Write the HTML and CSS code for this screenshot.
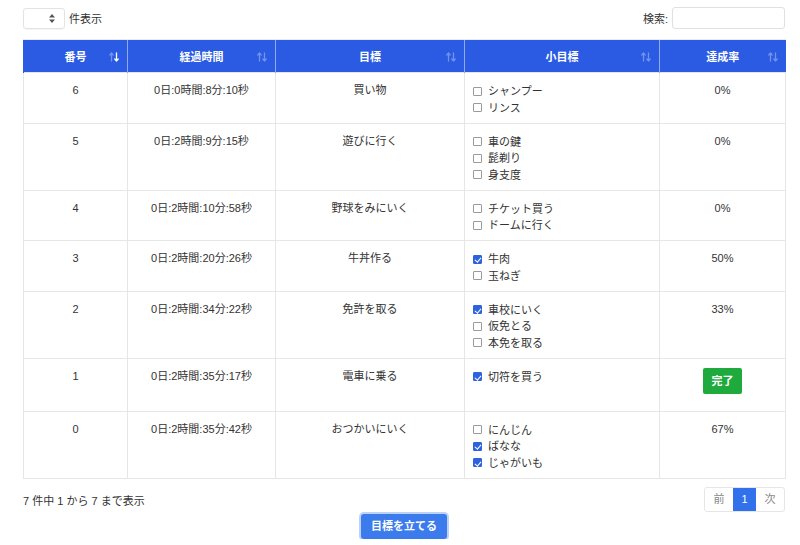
FILE: index.html
```html
<!DOCTYPE html>
<html lang="ja">
<head>
<meta charset="utf-8">
<link rel="stylesheet" href="styles.css">
</head>
<body>
<div class="page">
  <div class="topbar">
    <div class="length">
      <span class="select"><svg width="6" height="9" viewBox="0 0 6 9"><path d="M3 0L6 3.5H0Z M3 9L0 5.5H6Z" fill="#555"/></svg></span>
      <span>件表示</span>
    </div>
    <div class="search">
      <span>検索:</span>
      <span class="input"></span>
    </div>
  </div>

  <table class="grid">
    <colgroup>
      <col style="width:104px"><col style="width:148px"><col style="width:189px"><col style="width:195px"><col style="width:126px">
    </colgroup>
    <thead>
      <tr>
        <th><span class="hl">番号</span><span class="sort active"><svg width="10" height="10" viewBox="0 0 10 10"><path d="M2.5 9V1M0.8 3L2.5 1L4.2 3" class="up"/><path d="M7.5 1V9M5.8 7L7.5 9L9.2 7" class="down"/></svg></span></th>
        <th><span class="hl">経過時間</span><span class="sort"><svg width="10" height="10" viewBox="0 0 10 10"><path d="M2.5 9V1M0.8 3L2.5 1L4.2 3" class="up"/><path d="M7.5 1V9M5.8 7L7.5 9L9.2 7" class="down"/></svg></span></th>
        <th><span class="hl">目標</span><span class="sort"><svg width="10" height="10" viewBox="0 0 10 10"><path d="M2.5 9V1M0.8 3L2.5 1L4.2 3" class="up"/><path d="M7.5 1V9M5.8 7L7.5 9L9.2 7" class="down"/></svg></span></th>
        <th><span class="hl">小目標</span><span class="sort"><svg width="10" height="10" viewBox="0 0 10 10"><path d="M2.5 9V1M0.8 3L2.5 1L4.2 3" class="up"/><path d="M7.5 1V9M5.8 7L7.5 9L9.2 7" class="down"/></svg></span></th>
        <th><span class="hl">達成率</span><span class="sort"><svg width="10" height="10" viewBox="0 0 10 10"><path d="M2.5 9V1M0.8 3L2.5 1L4.2 3" class="up"/><path d="M7.5 1V9M5.8 7L7.5 9L9.2 7" class="down"/></svg></span></th>
      </tr>
    </thead>
    <tbody>
      <tr>
        <td>6</td><td>0日:0時間:8分:10秒</td><td>買い物</td>
        <td class="subs"><div class="item"><span class="cb"></span>シャンプー</div><div class="item"><span class="cb"></span>リンス</div></td>
        <td>0%</td>
      </tr>
      <tr>
        <td>5</td><td>0日:2時間:9分:15秒</td><td>遊びに行く</td>
        <td class="subs"><div class="item"><span class="cb"></span>車の鍵</div><div class="item"><span class="cb"></span>髭剃り</div><div class="item"><span class="cb"></span>身支度</div></td>
        <td>0%</td>
      </tr>
      <tr>
        <td>4</td><td>0日:2時間:10分:58秒</td><td>野球をみにいく</td>
        <td class="subs"><div class="item"><span class="cb"></span>チケット買う</div><div class="item"><span class="cb"></span>ドームに行く</div></td>
        <td>0%</td>
      </tr>
      <tr>
        <td>3</td><td>0日:2時間:20分:26秒</td><td>牛丼作る</td>
        <td class="subs"><div class="item"><span class="cb on"></span>牛肉</div><div class="item"><span class="cb"></span>玉ねぎ</div></td>
        <td>50%</td>
      </tr>
      <tr>
        <td>2</td><td>0日:2時間:34分:22秒</td><td>免許を取る</td>
        <td class="subs"><div class="item"><span class="cb on"></span>車校にいく</div><div class="item"><span class="cb"></span>仮免とる</div><div class="item"><span class="cb"></span>本免を取る</div></td>
        <td>33%</td>
      </tr>
      <tr>
        <td>1</td><td>0日:2時間:35分:17秒</td><td>電車に乗る</td>
        <td class="subs"><div class="item"><span class="cb on"></span>切符を買う</div></td>
        <td><span class="done">完了</span></td>
      </tr>
      <tr>
        <td>0</td><td>0日:2時間:35分:42秒</td><td>おつかいにいく</td>
        <td class="subs"><div class="item"><span class="cb"></span>にんじん</div><div class="item"><span class="cb on"></span>ばなな</div><div class="item"><span class="cb on"></span>じゃがいも</div></td>
        <td>67%</td>
      </tr>
    </tbody>
  </table>

  <div class="footer">
    <div class="info">7 件中 1 から 7 まで表示</div>
    <div class="pager">
      <span class="pg">前</span><span class="pg cur">1</span><span class="pg">次</span>
    </div>
  </div>
  <div class="actions">
    <span class="btn">目標を立てる</span>
  </div>
</div>
</body>
</html>
```

FILE: styles.css
```css
* { box-sizing: border-box; }
html, body { margin: 0; padding: 0; background: #fff; }
body {
  font-family: "Liberation Sans", "Noto Sans CJK JP", sans-serif;
  font-size: 11px;
  color: #333;
}
.page { padding: 7px 15px 0 23px; }

.topbar { display: flex; justify-content: space-between; align-items: center; height: 22px; }
.length { display: flex; align-items: center; gap: 4px; }
.select {
  width: 42px; height: 21px;
  border: 1px solid #e3e3e3; border-radius: 3px;
  display: flex; align-items: center; justify-content: flex-end;
  padding-right: 9px;
  box-shadow: 0 1px 1px rgba(0,0,0,0.04);
}
.search { display: flex; align-items: center; gap: 4px; }
.input {
  width: 113px; height: 22px;
  border: 1px solid #e0e0e0; border-radius: 3px;
  display: block;
}

.grid {
  margin-top: 10px;
  width: 762px;
  border-collapse: collapse;
  table-layout: fixed;
}
.grid th {
  background: #2b5be2;
  color: #fff;
  font-weight: bold;
  height: 33px;
  padding: 0 8px;
  position: relative;
  border-left: 1px solid #8fa9ee;
  border-top: 1px solid #e7ecfb;
  text-align: center;
}
.grid th:first-child { border-left: 1px solid #2b5be2; }
.grid th .hl { display: inline-block; }
.sort { position: absolute; right: 8px; top: 12px; line-height: 0; }
.sort path { fill: none; stroke-width: 1.3; stroke: #6f93ee; stroke-linecap: round; stroke-linejoin: round; }
.sort.active .down { stroke: #fff; }

.grid td {
  border: 1px solid #e6e6e6;
  padding: 9px 8px 8px;
  line-height: 16px;
  vertical-align: top;
  text-align: center;
  color: #333;
}
.grid td.subs { text-align: left; padding-left: 8px; padding-top: 10px; padding-bottom: 6.5px; }
.item { display: flex; align-items: center; gap: 6px; height: 16.5px; overflow: visible; }
.cb {
  width: 9px; height: 9px;
  border: 1px solid #9a9a9a;
  border-radius: 1px;
  display: inline-block;
  background: #fff;
  position: relative;
  flex: none;
}
.cb.on { background: #2f63dd; border-color: #2f63dd; }
.cb.on::after {
  content: "";
  position: absolute;
  left: 2.3px; top: 0.3px;
  width: 2.5px; height: 5px;
  border: solid #fff;
  border-width: 0 1.4px 1.4px 0;
  transform: rotate(40deg);
}
.done {
  display: inline-block;
  background: #1faa3e;
  color: #fff;
  font-weight: bold;
  width: 39px; height: 26px;
  line-height: 26px;
  border-radius: 2px;
  margin-bottom: 9px;
}

.footer { display: flex; justify-content: space-between; align-items: center; margin-top: 8px; }
.info { color: #333; padding-top: 2px; }
.pager { display: flex; border: 1px solid #e6e6e6; border-radius: 3px; overflow: hidden; }
.pg { height: 23px; line-height: 23px; width: 28px; text-align: center; color: #888; }
.pg.cur { width: 23px; background: #3172ec; color: #fff; }
.actions { display: flex; justify-content: center; margin-top: 2px; padding-left: 0; }
.btn {
  display: inline-block;
  background: #3b7bec;
  color: #fff;
  font-weight: bold;
  height: 25px; line-height: 25px;
  padding: 0 10px;
  border-radius: 3px;
  box-shadow: 0 0 0 2px #bcd2f7;
}
```
